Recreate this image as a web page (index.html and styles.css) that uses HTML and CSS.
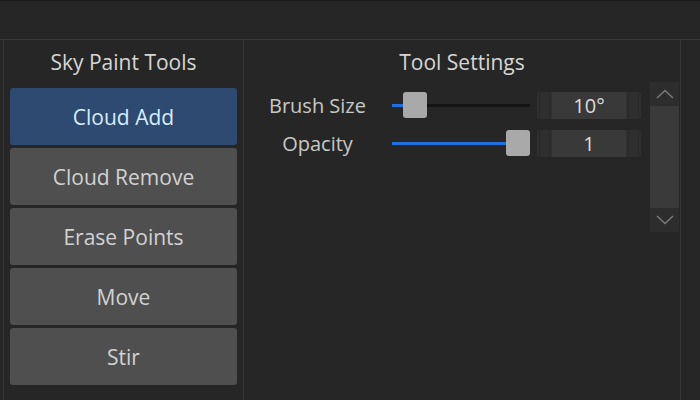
FILE: index.html
```html
<!DOCTYPE html>
<html>
<head>
<meta charset="utf-8">
<link rel="stylesheet" href="styles.css">
</head>
<body>
<div class="app">
  <div class="topbar"></div>
  <div class="main">
    <div class="panel tools">
      <div class="panel-title">Sky Paint Tools</div>
      <div class="tool-list">
        <div class="tool active">Cloud Add</div>
        <div class="tool">Cloud Remove</div>
        <div class="tool">Erase Points</div>
        <div class="tool">Move</div>
        <div class="tool">Stir</div>
      </div>
    </div>
    <div class="panel settings">
      <div class="panel-title">Tool Settings</div>
      <div class="settings-body">
        <div class="rows">
          <div class="row">
            <div class="label">Brush Size</div>
            <div class="slider">
              <div class="track"><div class="fill" style="width:11px"></div></div>
              <div class="thumb" style="left:11px"></div>
            </div>
            <div class="field"><span class="grip"></span><span class="val">10°</span><span class="grip"></span></div>
          </div>
          <div class="row">
            <div class="label">Opacity</div>
            <div class="slider">
              <div class="track"><div class="fill" style="width:114px"></div></div>
              <div class="thumb" style="left:114px"></div>
            </div>
            <div class="field"><span class="grip"></span><span class="val">1</span><span class="grip"></span></div>
          </div>
        </div>
        <div class="scrollbar">
          <div class="sb-btn">
            <svg width="18" height="10" viewBox="0 0 18 10"><path d="M1 9 L9 1.5 L17 9" fill="none" stroke="#7a7a7a" stroke-width="1.5"/></svg>
          </div>
          <div class="sb-thumb"></div>
          <div class="sb-btn">
            <svg width="18" height="10" viewBox="0 0 18 10"><path d="M1 1 L9 8.5 L17 1" fill="none" stroke="#7a7a7a" stroke-width="1.5"/></svg>
          </div>
        </div>
      </div>
    </div>
  </div>
</div>
</body>
</html>
```
FILE: styles.css
```css
* { box-sizing: border-box; }
html, body {
  margin: 0;
  padding: 0;
  background: #262626;
}
body {
  width: 700px;
  height: 400px;
  overflow: hidden;
  font-family: "Open Sans", "Noto Sans", sans-serif;
  color: #d4d4d4;
}
.app {
  display: flex;
  flex-direction: column;
  height: 400px;
}
.topbar {
  height: 40px;
  border-top: 1px solid #1c1c1c;
  border-bottom: 1px solid #3a3a3a;
}
.main {
  display: flex;
  flex: 1;
  padding-left: 3px;
}
.panel {
  display: flex;
  flex-direction: column;
  border-left: 1px solid #363636;
}
.tools {
  width: 240px;
}
.settings {
  width: 438px;
  border-right: 1px solid #363636;
}
.panel-title {
  height: 42px;
  line-height: 44px;
  text-align: center;
  font-size: 21px;
  color: #d6d6d6;
}
.tool-list {
  display: flex;
  flex-direction: column;
  gap: 3px;
  padding: 6px 6px 0 6px;
}
.tool {
  height: 57px;
  border-radius: 3px;
  background: #4f4f4f;
  display: flex;
  align-items: center;
  justify-content: center;
  font-size: 21px;
  color: #d2d2d2;
}
.tool.active {
  background: #2e4a70;
  color: #d6ecff;
}
.settings-body {
  display: flex;
  gap: 9px;
  padding-left: 5px;
}
.rows {
  display: flex;
  flex-direction: column;
  gap: 12px;
  padding-top: 10px;
}
.row {
  display: flex;
  align-items: center;
  height: 26px;
}
.label {
  width: 137px;
  text-align: center;
  font-size: 20px;
  color: #c8c8c8;
}
.slider {
  position: relative;
  width: 138px;
  height: 26px;
  margin-left: 6px;
  display: flex;
  align-items: center;
}
.track {
  width: 100%;
  height: 3px;
  background: #141414;
}
.fill {
  height: 3px;
  background: #1f6fe0;
}
.thumb {
  position: absolute;
  top: 0;
  width: 24px;
  height: 26px;
  border-radius: 3px;
  background: #a9a9a9;
}
.field {
  margin-left: 7px;
  width: 104px;
  height: 27px;
  display: flex;
  background: #2f2f2f;
  border-radius: 2px;
}
.grip {
  width: 11px;
  margin: 0 2px;
  border-left: 1px solid #282828;
  border-right: 1px solid #282828;
}
.val {
  flex: 1;
  background: #393939;
  text-align: center;
  font-size: 20px;
  line-height: 27px;
  color: #dcdcdc;
}
.scrollbar {
  width: 29px;
  height: 150px;
  display: flex;
  flex-direction: column;
  background: #2d2d2d;
}
.sb-btn {
  height: 24px;
  display: flex;
  align-items: center;
  justify-content: center;
}
.sb-thumb {
  flex: 1;
  background: #3a3a3a;
}
```
